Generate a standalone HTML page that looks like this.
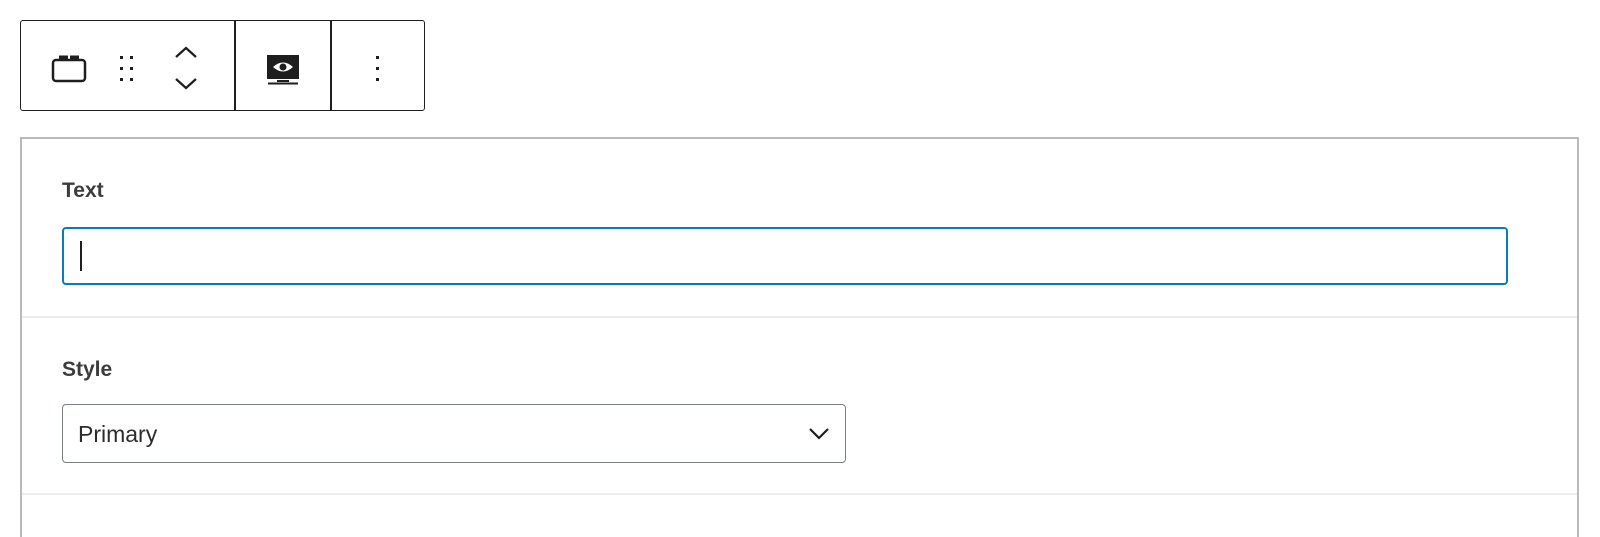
<!DOCTYPE html>
<html><head><style>
body{margin:0;width:1600px;height:526px;background:#fff;font-family:"Liberation Sans",sans-serif;position:relative;overflow:hidden}
.tb{position:absolute;left:20px;top:20px;width:405px;height:91px;border:1.5px solid #1e1e1e;border-radius:3px;box-sizing:border-box}
.sep{position:absolute;top:0;width:1.5px;height:100%;background:#1e1e1e}
.panel{position:absolute;left:20px;top:137px;width:1559px;height:400px;border:2px solid #b8bbb6;border-bottom:none;box-sizing:border-box;background:#fff}
.div{position:absolute;left:0;right:0;height:2px;background:#ececec}
.lbl{position:absolute;left:40px;font-weight:bold;font-size:21px;color:#3c3c3c}
.inp{position:absolute;left:40px;top:88px;width:1446px;height:58px;border:2px solid #0a7cbb;border-radius:4px;box-sizing:border-box}
.sel{position:absolute;left:40px;top:265px;width:784px;height:59px;border:1.5px solid #7a7f85;border-radius:4px;box-sizing:border-box;font-size:23px;color:#2c2c2c;padding:16px 0 0 15px}
</style></head><body>
<div class="tb">
<svg style="position:absolute;left:30px;top:33px" width="36" height="30" viewBox="0 0 36 30"><rect x="2" y="6" width="32" height="21" rx="3" fill="none" stroke="#1e1e1e" stroke-width="2.5"/><rect x="8" y="1.5" width="9" height="4" fill="#1e1e1e"/><rect x="19" y="1.5" width="9" height="4" fill="#1e1e1e"/></svg>
<svg style="position:absolute;left:98px;top:34px" width="16" height="28"><g fill="#1e1e1e"><rect x="1" y="1" width="3" height="3"/><rect x="11" y="1" width="3" height="3"/><rect x="1" y="12" width="3" height="3"/><rect x="11" y="12" width="3" height="3"/><rect x="1" y="23" width="3" height="3"/><rect x="11" y="23" width="3" height="3"/></g></svg>
<svg style="position:absolute;left:152px;top:24px" width="26" height="46" fill="none" stroke="#1e1e1e" stroke-width="2.2"><path d="M3 12 L13 3 L23 12"/><path d="M3 34 L13 43 L23 34"/></svg>
<div class="sep" style="left:213px"></div>
<svg style="position:absolute;left:244px;top:33px" width="36" height="32"><rect x="2" y="1" width="32" height="24" fill="#1e1e1e"/><path d="M8 13 Q18 4 28 13 Q18 22 8 13Z" fill="#fff"/><circle cx="18" cy="13" r="3.5" fill="#1e1e1e"/><rect x="12" y="26" width="12" height="2" fill="#1e1e1e"/><rect x="3" y="28.5" width="30" height="2" fill="#1e1e1e"/></svg>
<div class="sep" style="left:309px"></div>
<svg style="position:absolute;left:354px;top:34px" width="6" height="28" fill="#1e1e1e"><rect x="1" y="1" width="3" height="3"/><rect x="1" y="12" width="3" height="3"/><rect x="1" y="23" width="3" height="3"/></svg>
</div>
<div class="panel">
<div class="lbl" style="top:40px">Text</div>
<div class="inp"><div style="position:absolute;left:16px;top:12px;width:1.5px;height:30px;background:#1e1e1e"></div></div>
<div class="div" style="top:177px"></div>
<div class="lbl" style="top:219px">Style</div>
<div class="sel">Primary<svg style="position:absolute;right:15px;top:22px" width="22" height="14" fill="none" stroke="#1e1e1e" stroke-width="2.2"><path d="M2 2 L11 11 L20 2"/></svg></div>
<div class="div" style="top:354px"></div>
</div>
</body></html>
